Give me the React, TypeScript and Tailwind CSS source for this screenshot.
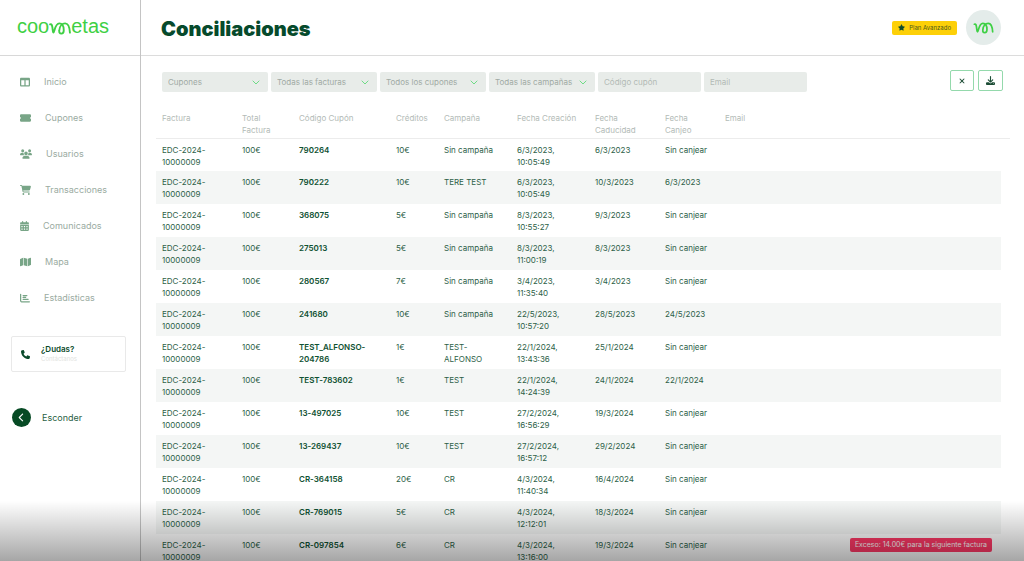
import type { ReactNode } from "react";
import {
  FaTableColumns,
  FaTicketSimple,
  FaUsers,
  FaCartShopping,
  FaCalendarDays,
  FaMap,
  FaChartBar,
  FaPhone,
  FaStar,
  FaXmark,
  FaDownload,
  FaChevronLeft,
} from "react-icons/fa6";

const NAV: { label: string; icon: ReactNode }[] = [
  { label: "Inicio", icon: <FaTableColumns className="h-[10px] w-[10px]" /> },
  { label: "Cupones", icon: <FaTicketSimple className="h-[10px] w-[11px]" /> },
  { label: "Usuarios", icon: <FaUsers className="h-[10px] w-[12px]" /> },
  { label: "Transacciones", icon: <FaCartShopping className="h-[10px] w-[11px]" /> },
  { label: "Comunicados", icon: <FaCalendarDays className="h-[10px] w-[9px]" /> },
  { label: "Mapa", icon: <FaMap className="h-[10px] w-[11px]" /> },
  { label: "Estadísticas", icon: <FaChartBar className="h-[10px] w-[10px]" /> },
];

const SELECTS = ["Cupones", "Todas las facturas", "Todos los cupones", "Todas las campañas"];
const INPUTS = ["Código cupón", "Email"];

const COLUMNS: { label: string; width: string }[] = [
  { label: "Factura", width: "w-[80px]" },
  { label: "Total Factura", width: "w-[57px]" },
  { label: "Código Cupón", width: "w-[97px]" },
  { label: "Créditos", width: "w-[48px]" },
  { label: "Campaña", width: "w-[73px]" },
  { label: "Fecha Creación", width: "w-[78px]" },
  { label: "Fecha Caducidad", width: "w-[70px]" },
  { label: "Fecha Canjeo", width: "w-[60px]" },
  { label: "Email", width: "" },
];

const ROWS: string[][] = [
  ["790264", "10€", "Sin campaña", "6/3/2023, 10:05:49", "6/3/2023", "Sin canjear"],
  ["790222", "10€", "TERE TEST", "6/3/2023, 10:05:49", "10/3/2023", "6/3/2023"],
  ["368075", "5€", "Sin campaña", "8/3/2023, 10:55:27", "9/3/2023", "Sin canjear"],
  ["275013", "5€", "Sin campaña", "8/3/2023, 11:00:19", "8/3/2023", "Sin canjear"],
  ["280567", "7€", "Sin campaña", "3/4/2023, 11:35:40", "3/4/2023", "Sin canjear"],
  ["241680", "10€", "Sin campaña", "22/5/2023, 10:57:20", "28/5/2023", "24/5/2023"],
  ["TEST_ALFONSO-204786", "1€", "TEST-ALFONSO", "22/1/2024, 13:43:36", "25/1/2024", "Sin canjear"],
  ["TEST-783602", "1€", "TEST", "22/1/2024, 14:24:39", "24/1/2024", "22/1/2024"],
  ["13-497025", "10€", "TEST", "27/2/2024, 16:56:29", "19/3/2024", "Sin canjear"],
  ["13-269437", "10€", "TEST", "27/2/2024, 16:57:12", "29/2/2024", "Sin canjear"],
  ["CR-364158", "20€", "CR", "4/3/2024, 11:40:34", "16/4/2024", "Sin canjear"],
  ["CR-769015", "5€", "CR", "4/3/2024, 12:12:01", "18/3/2024", "Sin canjear"],
  ["CR-097854", "6€", "CR", "4/3/2024, 13:16:00", "19/3/2024", "Sin canjear"],
];

function Squiggle({ className }: { className: string }) {
  return (
    <svg viewBox="0 0 64 38" className={className} fill="none" stroke="currentColor" strokeWidth="5.5" strokeLinecap="round" strokeLinejoin="round" aria-hidden="true">
      <path d="M3 7 C8 5 9 10 10 17 C11 25 11 31 13 31 C16 31 17 4 30 4 C39 4 43 14 43 24 C43 31 41 34 36 34 C31 34 29 31 30 24 C31 13 38 4 47 4 C57 4 60 14 61 31" />
    </svg>
  );
}

function Sidebar() {
  return (
    <aside className="flex w-[141px] shrink-0 flex-col border-r border-[#c4c4c4]">
      <a href="#inicio" aria-label="coometas" className="flex h-14 items-center border-b border-[#d8d8d8] pb-[3px] pl-[17px] font-['Liberation_Sans',sans-serif] text-[20px] leading-6 text-[#3ed044]">
        coo
        <Squiggle className="mt-1 h-[13px] w-[22px]" />
        etas
      </a>
      <nav className="flex flex-col gap-3 pt-[14px] pl-5">
        {NAV.map((item) => (
          <a key={item.label} href={"#" + item.label.toLowerCase()} className="flex h-6 items-center gap-[14px] text-[9px] text-[#9aaba1]">
            <span className="text-[#78a587]">{item.icon}</span>
            {item.label}
          </a>
        ))}
      </nav>
      <a href="#contacto" className="mt-[26px] mr-[14px] ml-[11px] flex h-9 items-center gap-[11px] rounded-xs border border-[#e9e9e9] pl-[9px] text-[#0a4a2a]">
        <FaPhone className="size-[9px]" />
        <span className="flex flex-col">
          <span className="text-[8px] leading-[10px] font-semibold">¿Dudas?</span>
          <span className="text-[6px] leading-[10px] text-[#dfe3e0]">Contáctanos</span>
        </span>
      </a>
      <button type="button" className="mt-9 ml-3 flex items-center gap-[11px] text-[9px] text-[#2a5f45]">
        <span className="flex size-[19px] items-center justify-center rounded-full bg-[#064a24] text-[9px] text-white">
          <FaChevronLeft />
        </span>
        Esconder
      </button>
    </aside>
  );
}

function Filters() {
  return (
    <div className="flex items-start justify-between px-[21px] pt-[14px]">
      <form className="flex gap-[3px] pt-0.5">
        {SELECTS.map((label) => (
          <div key={label} className="relative flex w-[106px]">
            <select aria-label={label} className="h-5 w-full appearance-none rounded-xs bg-[#e8ece9] pl-1.5 text-[8px] text-[#a0aaa4]">
              <option>{label}</option>
            </select>
            <svg viewBox="0 0 8 5" className="pointer-events-none absolute top-2 right-2 h-[5px] w-2" fill="none" stroke="#6fdc86" strokeWidth="1" aria-hidden="true">
              <path d="M0.7 0.7 L4 4 L7.3 0.7" />
            </svg>
          </div>
        ))}
        {INPUTS.map((label) => (
          <input key={label} aria-label={label} placeholder={label} className="h-5 w-[103px] rounded-xs bg-[#e8ece9] px-1.5 text-[8px] placeholder:text-[#b2bab5]" />
        ))}
      </form>
      <div className="flex gap-1">
        <button type="button" aria-label="Limpiar filtros" className="flex h-[21px] w-6 items-center justify-center rounded-xs border border-[#94d9ac] text-[#1d4d36]">
          <FaXmark className="size-2" />
        </button>
        <button type="button" aria-label="Descargar" className="flex h-[21px] w-[25px] items-center justify-center rounded-xs border border-[#94d9ac] text-[#1d4d36]">
          <FaDownload className="size-[9px]" />
        </button>
      </div>
    </div>
  );
}

function CouponTable() {
  return (
    <div className="mt-[17px] pr-[14px] pl-[15px]">
      <table className="w-full table-fixed border-collapse text-left text-[8px] leading-3 text-[#2d5f48]">
        <thead>
          <tr className="h-[29px] border-b border-[#ececec] align-top text-[#b3bbb7]">
            {COLUMNS.map((c) => (
              <th key={c.label} scope="col" className={"px-1.5 pt-[3px] font-normal " + c.width}>
                {c.label}
              </th>
            ))}
            <td className="w-[9px]" />
          </tr>
        </thead>
        <tbody>
          {ROWS.map(([code, credits, campaign, created, expires, redeemed], i) => {
            const cell = i % 2 ? "bg-[#f4f6f5] px-1.5 pt-[5px]" : "px-1.5 pt-[5px]";
            return (
              <tr key={code} className="h-[33px] align-top">
                <td className={cell}>EDC-2024-10000009</td>
                <td className={cell}>100€</td>
                <td className={cell + " font-semibold text-[#0f5132]"}>{code}</td>
                <td className={cell}>{credits}</td>
                <td className={cell}>{campaign}</td>
                <td className={cell}>{created}</td>
                <td className={cell}>{expires}</td>
                <td className={cell + " whitespace-nowrap"}>{redeemed}</td>
                <td className={cell} />
              </tr>
            );
          })}
        </tbody>
      </table>
    </div>
  );
}

export default function App() {
  return (
    <div className="relative flex h-screen overflow-hidden bg-white font-['Inter',sans-serif]">
      <Sidebar />
      <main className="min-w-0 flex-1">
        <header className="flex h-14 items-center justify-between border-b border-[#dcdcdc] pr-[23px] pl-5">
          <h1 className="pt-0.5 text-[20px] font-black text-[#064a2c]">Conciliaciones</h1>
          <div className="flex items-center gap-[9px]">
            <span className="flex h-[14px] items-center gap-1 rounded-xs bg-[#fdd008] px-1.5 text-[6px] text-[#4d5a1c]">
              <FaStar className="size-[7px] text-[#0f4a2c]" />
              Plan Avanzado
            </span>
            <button type="button" aria-label="Perfil" className="flex size-[35px] items-center justify-center rounded-full bg-[#e4ecea] text-[#3ed044]">
              <Squiggle className="h-[12px] w-[21px]" />
            </button>
          </div>
        </header>
        <Filters />
        <CouponTable />
      </main>
      <div role="status" className="absolute right-8 bottom-[9px] flex h-[14px] items-center rounded-xs bg-[#ff3866] px-[5px] text-[7px] text-white">
        Exceso: 14.00€ para la siguiente factura
      </div>
      <div className="pointer-events-none absolute inset-x-0 bottom-0 h-[60px] bg-linear-to-b from-transparent to-black/35" />
    </div>
  );
}
